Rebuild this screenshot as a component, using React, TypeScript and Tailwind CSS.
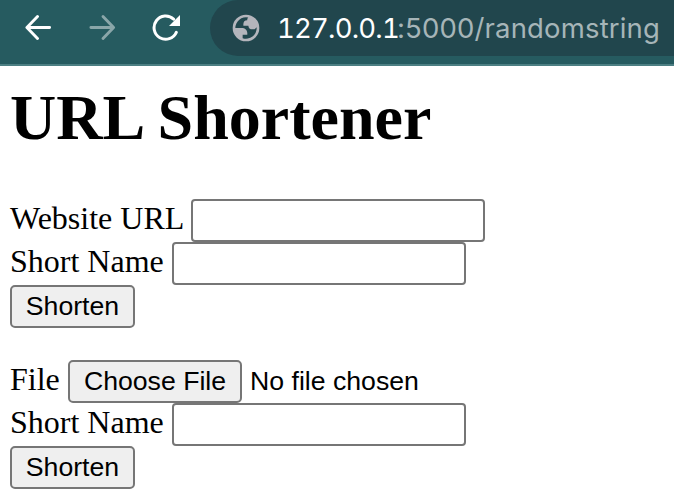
import React from "react";

const field = "box-border h-[43px] w-[294px] shrink-0 rounded-[4px] border-2 border-[#767676] bg-white px-1 outline-none";
const button = "box-border flex h-[43px] shrink-0 items-center justify-center rounded-[5px] border-2 border-[#767676] bg-[#efefef] pb-px text-[26.67px] leading-[30px] whitespace-nowrap";
const sans = "font-['Liberation_Sans',Arial,sans-serif]";

function Toolbar() {
  return (
    <header className="box-border flex h-[66px] items-start border-b-2 border-[#4c7f83] bg-[#265b60]">
      <div className="flex h-14 w-[210px] shrink-0 items-center">
        <svg className="ml-[25px] h-7 w-[27px]" viewBox="0 0 27 28" fill="none" stroke="white" strokeWidth="2.9" strokeLinecap="round" strokeLinejoin="round">
          <path d="M24.6 13.5H2.2M12.5 2.5L1.9 13.5L12.5 24.5" />
        </svg>
        <svg className="ml-[37px] h-7 w-[27px]" viewBox="0 0 27 28" fill="none" stroke="#8aa6a9" strokeWidth="2.9" strokeLinecap="round" strokeLinejoin="round">
          <path d="M1.9 13.5H24.3M14 2.5L24.6 13.5L14 24.5" />
        </svg>
        <svg className="ml-[36px] h-7 w-7" viewBox="0 0 28 28">
          <path d="M24.3 18.3A11.6 11.6 0 1 1 21.6 5.2" fill="none" stroke="white" strokeWidth="3" strokeLinecap="round" />
          <path d="M28 1V12H17Z" fill="white" />
        </svg>
      </div>
      <div className="flex h-14 flex-1 items-center rounded-l-full bg-[#21464d] pl-[20px] font-['Inter','Roboto',sans-serif]">
        <svg className="h-8 w-8 shrink-0" viewBox="0 0 24 24" fill="#b4b5bc" fillRule="evenodd">
          <path d="M12 2a10 10 0 1 1 0 20 10 10 0 0 1 0-20zM4 12h4.4c3.407.022 4.922 1.73 4.543 5.127H9.488v2.47a8.004 8.004 0 0 0 10.498-8.083C19.327 12.504 18.332 13 17 13c-2.137 0-3.206-.916-3.206-2.75h-3.748c-.274-2.728.683-4.092 2.87-4.092 0-.975.327-1.597.811-1.97A8.004 8.004 0 0 0 4 12z" />
        </svg>
        <span className="ml-[15px] text-[27.5px] leading-8 whitespace-nowrap text-[#a6b5b8]">
          <span className="inline-block w-[120px] tracking-[-0.8px] text-white tabular-nums">127.0.0.1</span>
          <span className="tracking-[0.16px]">:5000/randomstring</span>
        </span>
      </div>
    </header>
  );
}

function NameRow() {
  return (
    <label className="flex h-[43px] items-start">
      <span className="w-[162px] pt-px leading-[37px]">Short Name</span>
      <input className={field} />
    </label>
  );
}

export default function App() {
  return (
    <div className="h-[500px] w-[674px] overflow-hidden bg-white text-black">
      <Toolbar />
      <main className="pl-[10px] font-['Liberation_Serif','Times_New_Roman',serif] text-[32px]">
        <h1 className="h-[133px] pt-[15px] text-[64px] leading-[74px] font-bold">URL Shortener</h1>
        <form>
          <label className="flex h-[43px] items-start">
            <span className="w-[181px] pt-px leading-[37px]">Website URL</span>
            <input className={field} />
          </label>
          <NameRow />
          <button type="button" className={`${button} ${sans} w-[125px]`}>Shorten</button>
        </form>
        <form className="mt-8">
          <div className="flex h-[43px] items-start">
            <span className="w-[58px] pt-px leading-[37px]">File</span>
            <button type="button" className={`${button} ${sans} w-[174px]`}>Choose File</button>
            <span className={`${sans} ml-2 pt-[6px] text-[26.67px] leading-[30px]`}>No file chosen</span>
          </div>
          <NameRow />
          <button type="button" className={`${button} ${sans} w-[125px]`}>Shorten</button>
        </form>
      </main>
    </div>
  );
}
